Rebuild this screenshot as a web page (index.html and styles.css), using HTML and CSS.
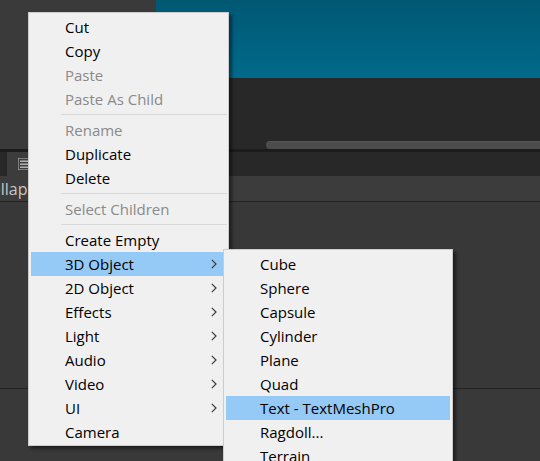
FILE: index.html
```html
<!DOCTYPE html>
<html>
<head>
<meta charset="utf-8">
<link rel="stylesheet" href="styles.css">
</head>
<body>
<div class="editor">
  <div class="upper">
    <div class="left-pane"></div>
    <div class="right-pane">
      <div class="game-view"></div>
      <div class="scroll-area"><div class="scrollbar"></div></div>
    </div>
  </div>
  <div class="divider"></div>
  <div class="tabbar">
    <div class="tab">
      <svg class="tab-icon" width="12" height="12" viewBox="0 0 12 12">
        <rect x="0" y="0" width="12" height="12" fill="none" stroke="#bdbdbd" stroke-width="1"/>
        <rect x="2" y="2.5" width="10" height="1.4" fill="#bdbdbd"/>
        <rect x="2" y="5.5" width="10" height="1.4" fill="#bdbdbd"/>
        <rect x="2" y="8.5" width="10" height="1.4" fill="#bdbdbd"/>
      </svg>
    </div>
  </div>
  <div class="toolbar"><span class="tool-label">Collapse</span></div>
  <div class="console"></div>
  <div class="status"></div>
</div>

<div class="menu main-menu">
  <div class="item">Cut</div>
  <div class="item">Copy</div>
  <div class="item disabled">Paste</div>
  <div class="item disabled">Paste As Child</div>
  <div class="sep"></div>
  <div class="item disabled">Rename</div>
  <div class="item">Duplicate</div>
  <div class="item">Delete</div>
  <div class="sep"></div>
  <div class="item disabled">Select Children</div>
  <div class="sep"></div>
  <div class="item">Create Empty</div>
  <div class="item active">3D Object<svg class="arrow" width="6" height="10" viewBox="0 0 6 10"><polyline points="0.8,0.8 5,5 0.8,9.2" fill="none" stroke="#3c3c3c" stroke-width="1.2"/></svg></div>
  <div class="item">2D Object<svg class="arrow" width="6" height="10" viewBox="0 0 6 10"><polyline points="0.8,0.8 5,5 0.8,9.2" fill="none" stroke="#3c3c3c" stroke-width="1.2"/></svg></div>
  <div class="item">Effects<svg class="arrow" width="6" height="10" viewBox="0 0 6 10"><polyline points="0.8,0.8 5,5 0.8,9.2" fill="none" stroke="#3c3c3c" stroke-width="1.2"/></svg></div>
  <div class="item">Light<svg class="arrow" width="6" height="10" viewBox="0 0 6 10"><polyline points="0.8,0.8 5,5 0.8,9.2" fill="none" stroke="#3c3c3c" stroke-width="1.2"/></svg></div>
  <div class="item">Audio<svg class="arrow" width="6" height="10" viewBox="0 0 6 10"><polyline points="0.8,0.8 5,5 0.8,9.2" fill="none" stroke="#3c3c3c" stroke-width="1.2"/></svg></div>
  <div class="item">Video<svg class="arrow" width="6" height="10" viewBox="0 0 6 10"><polyline points="0.8,0.8 5,5 0.8,9.2" fill="none" stroke="#3c3c3c" stroke-width="1.2"/></svg></div>
  <div class="item">UI<svg class="arrow" width="6" height="10" viewBox="0 0 6 10"><polyline points="0.8,0.8 5,5 0.8,9.2" fill="none" stroke="#3c3c3c" stroke-width="1.2"/></svg></div>
  <div class="item">Camera</div>
</div>

<div class="menu sub-menu">
  <div class="item">Cube</div>
  <div class="item">Sphere</div>
  <div class="item">Capsule</div>
  <div class="item">Cylinder</div>
  <div class="item">Plane</div>
  <div class="item">Quad</div>
  <div class="item active">Text - TextMeshPro</div>
  <div class="item">Ragdoll...</div>
  <div class="item">Terrain</div>
</div>
</body>
</html>
```

FILE: styles.css
```css
html, body {
  margin: 0;
  padding: 0;
}
body {
  width: 540px;
  height: 461px;
  overflow: hidden;
  position: relative;
  background: #393939;
  font-family: "Open Sans", "Noto Sans", sans-serif;
}
.editor {
  display: flex;
  flex-direction: column;
  height: 461px;
}
.upper {
  display: flex;
  height: 149px;
}
.left-pane {
  width: 156px;
  background: #3a3a3a;
}
.right-pane {
  flex: 1;
  display: flex;
  flex-direction: column;
}
.game-view {
  height: 78px;
  background: linear-gradient(#005873, #006a8a);
}
.scroll-area {
  flex: 1;
  background: #282828;
  padding: 63px 0 0 110px;
}
.scrollbar {
  height: 7px;
  background: #4c4c4c;
  border-top: 1px solid #555555;
  border-radius: 4px 0 0 4px;
}
.divider {
  height: 3px;
  background: #1c1c1c;
}
.tabbar {
  height: 24px;
  background: #282828;
  display: flex;
}
.tab {
  margin-left: 7px;
  width: 140px;
  background: #3c3c3c;
  display: flex;
  align-items: center;
  padding-left: 11px;
}
.tab-icon {
  display: block;
}
.toolbar {
  height: 25px;
  background: #3c3c3c;
  border-bottom: 1px solid #232323;
  display: flex;
  align-items: center;
  overflow: hidden;
}
.tool-label {
  margin-left: -19px;
  color: #c6c6c6;
  font-size: 16px;
}
.console {
  height: 186px;
  background: #383838;
  border-bottom: 1px solid #232323;
}
.status {
  flex: 1;
  background: #393939;
}

.menu {
  position: absolute;
  box-sizing: border-box;
  background: #f0f0f0;
  border: 1px solid #cccccc;
  box-shadow: 3px 3px 3px rgba(0, 0, 0, 0.45);
  padding: 2px 0 1px;
}
.main-menu {
  left: 28px;
  top: 12px;
  width: 201px;
}
.sub-menu {
  left: 223px;
  top: 249px;
  width: 230px;
}
.item {
  height: 24px;
  line-height: 24px;
  margin: 0 2px;
  padding: 0 9px 0 34px;
  display: flex;
  align-items: center;
  font-size: 15px;
  color: #000000;
  white-space: nowrap;
}
.item.disabled {
  color: #8a8a8a;
}
.item.active {
  background: #95c9f6;
}
.arrow {
  margin-left: auto;
  display: block;
}
.sep {
  height: 1px;
  background: #d8d8d8;
  margin: 3px 1px 3px 32px;
}
```
